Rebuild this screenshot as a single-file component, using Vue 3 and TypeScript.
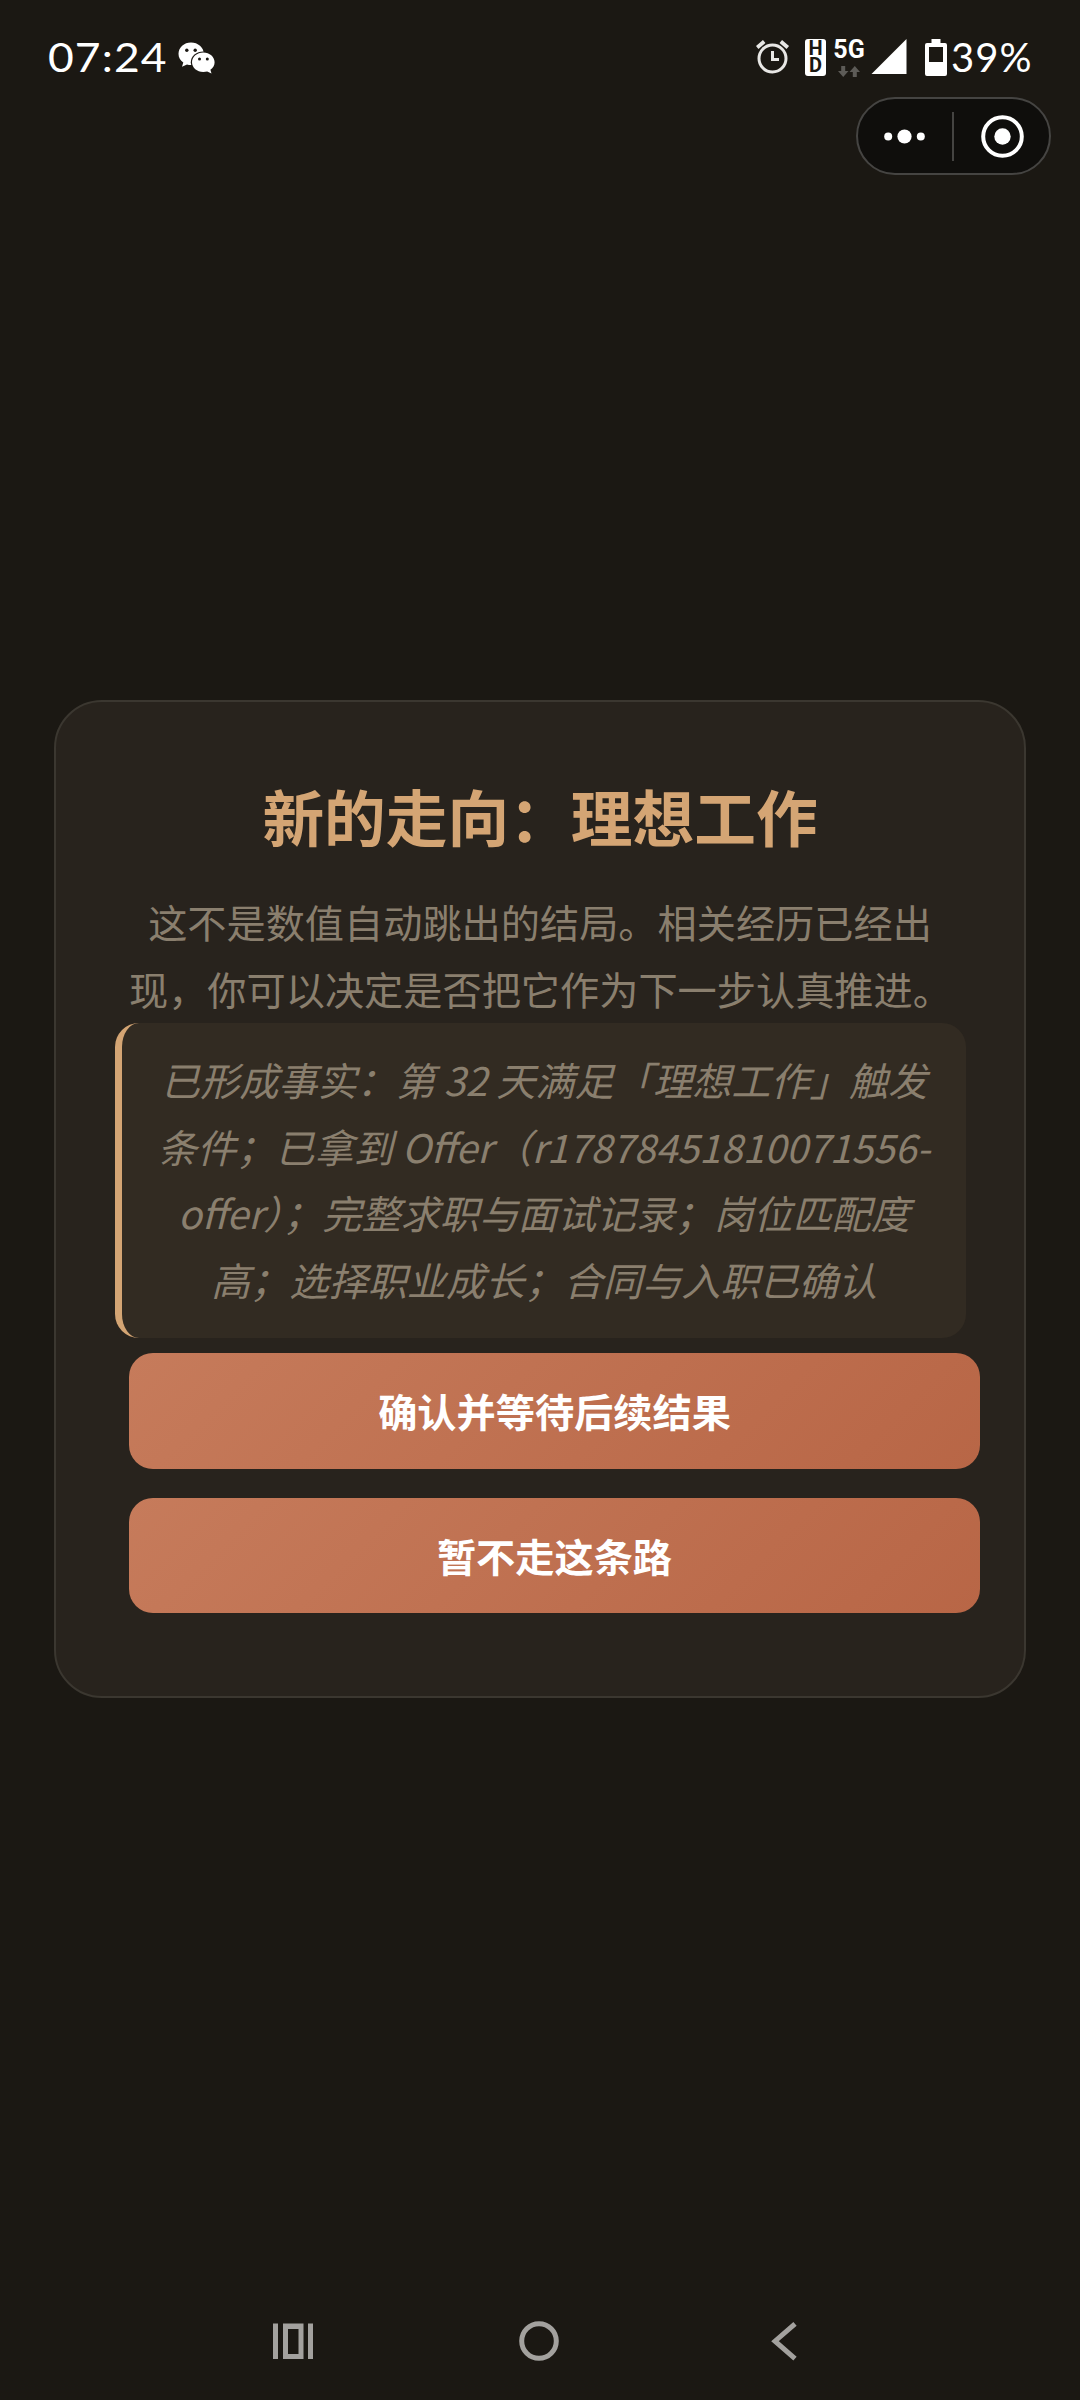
<script setup lang="ts">
const facts: string[] = [
  '已形成事实：第 32 天满足「理想工作」触发',
  '条件；已拿到 Offer（r17878451810071556-',
  'offer）；完整求职与面试记录；岗位匹配度',
  '高；选择职业成长；合同与入职已确认',
]
const intro: string[] = [
  '这不是数值自动跳出的结局。相关经历已经出',
  '现，你可以决定是否把它作为下一步认真推进。',
]
const actions: string[] = ['确认并等待后续结果', '暂不走这条路']
</script>

<template>
  <div class="screen">
    <header class="status">
      <div class="status-left">
        <span class="clock">07:24</span>
        <svg class="wechat" width="38" height="32" viewBox="0 0 38 32">
          <path fill="#fff" d="M13 0.500C6 0.500 0.500 5.400 0.500 11.800c0 3.700 1.800 6.600 4.800 8.600L4 24.800l5-2.400c1.300.4 2.600.5 4 .5 7 0 12.800-4.700 12.800-11.100S20 .5 13 .5z" />
          <ellipse cx="25.300" cy="20.300" rx="12.500" ry="10.900" fill="#1b1813" />
          <path fill="#fff" d="M25.300 10.600c-6.300 0-11.300 4.300-11.300 9.700s5 9.700 11.300 9.700c1.400 0 2.700-.2 3.900-.5l4.300 2-1.100-3.700c2.700-1.800 4.200-4.500 4.200-7.500 0-5.400-5-9.700-11.300-9.700z" />
          <g fill="#1b1813"><circle cx="8.800" cy="8.300" r="1.700" /><circle cx="17.200" cy="8.300" r="1.700" /><circle cx="21.500" cy="17" r="1.500" /><circle cx="29.300" cy="17" r="1.500" /></g>
        </svg>
      </div>
      <div class="status-right">
        <svg class="alarm" width="34" height="36" viewBox="0 0 34 36" fill="none" stroke="#e8e7e5" stroke-width="3">
          <circle cx="16.500" cy="19.500" r="13.500" />
          <path d="M16.500 12v8.600h6.500" />
          <path d="M1.200 8.500l7-6M31.800 8.500l-7-6" stroke-width="3.800" />
        </svg>
        <div class="hd"><span>HD</span></div>
        <div class="net">
          <span>5G</span>
          <svg width="22" height="11" viewBox="0 0 22 11" fill="#5d5b57">
            <path d="M3.200 0h4v5h3.300l-5.300 6L0 5h3.200zM14.800 11h4V6H22l-5.200-6-5.300 6h3.300z" />
          </svg>
        </div>
        <svg class="signal" width="36" height="36" viewBox="0 0 36 36"><path d="M35.500 0v35H.5z" fill="#fff" /></svg>
        <svg class="battery" width="22" height="37" viewBox="0 0 22 37">
          <path fill="#fff" fill-rule="evenodd" d="M6.500 0h9v4H20a2 2 0 0 1 2 2v29a2 2 0 0 1-2 2H2a2 2 0 0 1-2-2V6a2 2 0 0 1 2-2h4.500zM4 8v15h14V8z" />
        </svg>
        <span class="percent">39%</span>
      </div>
    </header>

    <div class="capsule-row">
      <div class="capsule">
        <svg width="191" height="74" viewBox="0 0 191 74">
          <g fill="#fff">
            <circle cx="30.200" cy="37.500" r="4" /><circle cx="46.500" cy="37.500" r="7.100" /><circle cx="62.800" cy="37.500" r="4" />
            <circle cx="144.500" cy="37.500" r="8.200" />
          </g>
          <rect x="94" y="13" width="2" height="49" fill="#454442" />
          <circle cx="144.500" cy="37.500" r="19.300" fill="none" stroke="#fff" stroke-width="4" />
        </svg>
      </div>
    </div>

    <main class="card">
      <h1 class="title">新的走向：理想工作</h1>
      <p class="intro"><span v-for="line in intro" :key="line">{{ line }}</span></p>
      <blockquote class="facts"><span v-for="line in facts" :key="line">{{ line }}</span></blockquote>
      <button v-for="label in actions" :key="label" class="action" type="button">{{ label }}</button>
    </main>

    <nav class="nav">
      <svg width="40" height="40" viewBox="0 0 40 40">
        <path fill="#a3a19e" fill-rule="evenodd" d="M0 2.500h5v35.500H0zM35 2.500h5v35.500h-5zM10 2.500h20.500v35.500H10zM15 8v25h10.500V8z" />
      </svg>
      <svg class="home" width="40" height="40" viewBox="0 0 40 40"><circle cx="20" cy="20" r="17.300" fill="none" stroke="#a3a19e" stroke-width="5" /></svg>
      <svg class="back" width="26" height="40" viewBox="0 0 26 40"><path d="M24 2.800L4 20.200 24 37.700" fill="none" stroke="#a3a19e" stroke-width="5" /></svg>
    </nav>
  </div>
</template>

<style>
body { margin: 0; background: #1b1813; }
</style>

<style scoped>
.screen {
  box-sizing: border-box;
  width: 1080px;
  height: 2400px;
  display: flex;
  flex-direction: column;
  overflow: hidden;
  background: #1b1813;
  font-family: "Noto Sans CJK SC", sans-serif;
}
.status {
  height: 97px;
  flex: none;
  display: flex;
  justify-content: space-between;
  padding: 0 46px 0 48px;
  color: #fff;
}
.status-left, .status-right { display: flex; align-items: flex-start; }
.clock {
  width: 130px;
  margin-top: 33px;
  font: 400 40px/48px Lato, sans-serif;
  letter-spacing: 1px;
  transform: scaleX(1.110);
  transform-origin: left;
}
.wechat { margin-top: 42px; }
.alarm { margin-top: 39px; }
.hd {
  box-sizing: border-box;
  width: 21px;
  height: 37px;
  padding: 1px 3px 0;
  margin: 39px 0 0 15px;
  border-radius: 3px;
  background: #fff;
  color: #1b1813;
  font: 700 20px/17px Roboto, sans-serif;
  text-align: center;
  word-break: break-all;
}
.net {
  width: 32px;
  margin: 38px 0 0 7px;
  display: flex;
  flex-direction: column;
  align-items: center;
  font: 700 25px/23px Roboto, sans-serif;
}
.net svg { margin-top: 5px; }
.signal { margin: 39px 0 0 6px; }
.battery { margin: 39px 0 0 17.500px; }
.percent {
  width: 83px;
  margin: 33px 0 0 4.500px;
  font: 400 40px/48px Lato, sans-serif;
  letter-spacing: 1px;
  white-space: nowrap;
}
.capsule-row { flex: none; display: flex; justify-content: flex-end; padding-right: 29px; }
.capsule {
  width: 191px;
  height: 74px;
  border: 2px solid #454442;
  border-radius: 39px;
  background: #0f0e0c;
}
.capsule svg { display: block; }
.card {
  flex: none;
  box-sizing: border-box;
  width: 972px;
  height: 998px;
  margin: 525px 54px 0;
  padding: 67px 73px 40px;
  border: 2px solid #3b3730;
  border-radius: 48px;
  background: #28231d;
  display: flex;
  flex-direction: column;
}
.card > * { flex: none; }
.title {
  margin: 0 0 14px;
  height: 105px;
  color: #d4a574;
  font-size: 61.700px;
  line-height: 92px;
  font-weight: 700;
  text-align: center;
  white-space: nowrap;
}
.intro, .facts {
  margin: 0;
  color: #8a7f6e;
  font-size: 39.200px;
  line-height: 66.600px;
  text-align: center;
  white-space: nowrap;
}
.intro { padding-bottom: 2px; }
.intro span, .facts span { display: block; }
.facts {
  box-sizing: border-box;
  width: 851px;
  height: 315px;
  margin: 0 0 15px -14px;
  padding: 23px 24px 24px 24px;
  border-left: 7px solid #d4a574;
  border-radius: 24px;
  background: #322b22;
  font-style: italic;
}
.action {
  width: 851px;
  height: 116px;
  margin: 0 0 29px;
  padding: 0 0 2px;
  border: 0;
  border-radius: 24px;
  background: linear-gradient(135deg, #c67b5b, #b86646);
  color: #fff;
  font: 700 39.200px/114px "Noto Sans CJK SC", sans-serif;
}
.action + .action { height: 115px; }
.nav {
  margin-top: auto;
  height: 79px;
  flex: none;
  display: flex;
  padding-left: 272.500px;
}
.home { margin-left: 206.700px; }
.back { margin-left: 212px; }
</style>
